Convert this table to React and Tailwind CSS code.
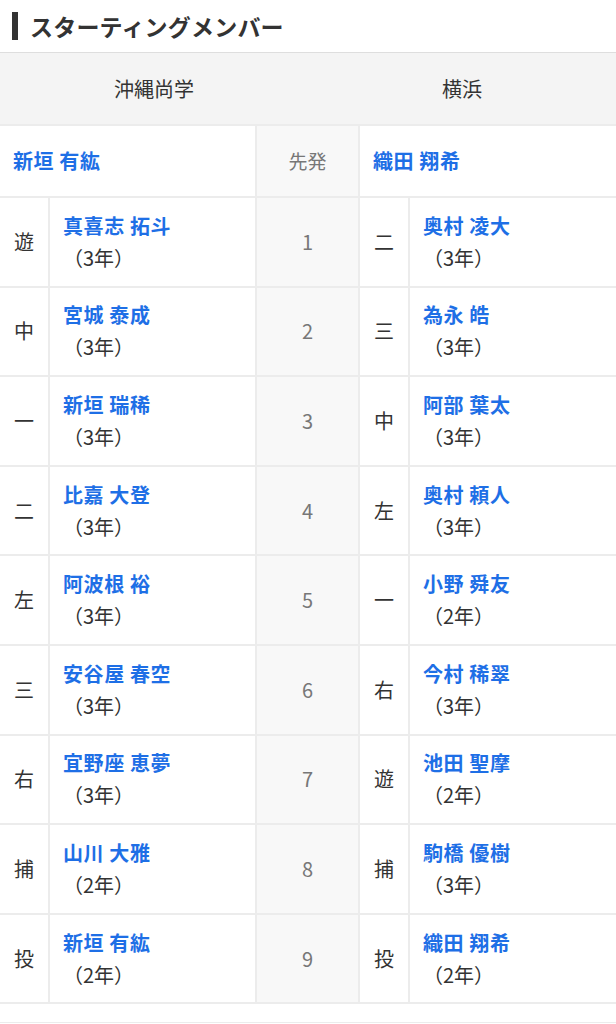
import React from "react";

// Starting lineup table: two teams side by side, batting order in the middle.

const TEAMS = { home: "沖縄尚学", away: "横浜" };

const STARTERS = { home: "新垣 有紘", away: "織田 翔希" };

const LINEUP = [
  { home: ["遊", "真喜志 拓斗", "3"], away: ["二", "奥村 凌大", "3"] },
  { home: ["中", "宮城 泰成", "3"], away: ["三", "為永 皓", "3"] },
  { home: ["一", "新垣 瑞稀", "3"], away: ["中", "阿部 葉太", "3"] },
  { home: ["二", "比嘉 大登", "3"], away: ["左", "奥村 頼人", "3"] },
  { home: ["左", "阿波根 裕", "3"], away: ["一", "小野 舜友", "2"] },
  { home: ["三", "安谷屋 春空", "3"], away: ["右", "今村 稀翠", "3"] },
  { home: ["右", "宜野座 恵夢", "3"], away: ["遊", "池田 聖摩", "2"] },
  { home: ["捕", "山川 大雅", "2"], away: ["捕", "駒橋 優樹", "3"] },
  { home: ["投", "新垣 有紘", "2"], away: ["投", "織田 翔希", "2"] },
];

const FONT = { fontFamily: '"Noto Sans CJK JP", "Noto Sans", sans-serif' };

function PlayerCell({ name, grade }) {
  return (
    <div className="bg-white h-[87.6px] flex flex-col justify-center pl-[13px] text-[20px] leading-[32px]">
      <span className="font-bold text-[#1e6fe6] tracking-[0.6px]">{name}</span>
      <span className="text-[#333]">（{grade}年）</span>
    </div>
  );
}

function PosCell({ pos }) {
  return (
    <div className="bg-white h-[87.6px] flex items-center justify-center text-[20px] text-[#333]">
      {pos}
    </div>
  );
}

export default function App() {
  return (
    <div className="w-[616px] bg-white" style={FONT}>
      <h2 className="h-[52px] flex items-center pl-3">
        <span className="w-[6px] h-[28px] bg-[#333] mr-3" />
        <span className="text-[23px] font-bold text-[#333] tracking-[0.2px]">
          スターティングメンバー
        </span>
      </h2>

      <div className="border-t border-[#dedede]">
        <div className="flex h-[71px] bg-[#f4f4f4] text-[20px] text-[#333]">
          <div className="w-[308px] flex items-center justify-center">{TEAMS.home}</div>
          <div className="flex-1 flex items-center justify-center">{TEAMS.away}</div>
        </div>

        <div className="grid grid-cols-[48px_205px_101px_48px_1fr] gap-[2px] bg-[#ececec] py-[2px]">
          <div className="col-span-2 bg-white h-[70px] flex items-center pl-[13px] text-[20px] font-bold text-[#1e6fe6] tracking-[0.6px]">
            {STARTERS.home}
          </div>
          <div className="bg-[#f8f8f8] h-[70px] flex items-center justify-center text-[19px] text-[#777]">
            先発
          </div>
          <div className="col-span-2 bg-white h-[70px] flex items-center pl-[13px] text-[20px] font-bold text-[#1e6fe6] tracking-[0.6px]">
            {STARTERS.away}
          </div>

          {LINEUP.map((row, i) => (
            <React.Fragment key={i}>
              <PosCell pos={row.home[0]} />
              <PlayerCell name={row.home[1]} grade={row.home[2]} />
              <div className="bg-[#f8f8f8] h-[87.6px] flex items-center justify-center text-[20px] text-[#777]">
                {i + 1}
              </div>
              <PosCell pos={row.away[0]} />
              <PlayerCell name={row.away[1]} grade={row.away[2]} />
            </React.Fragment>
          ))}
        </div>

        <div className="h-[18px]" />
        <div className="border-t border-[#ececec]" />
      </div>
    </div>
  );
}
